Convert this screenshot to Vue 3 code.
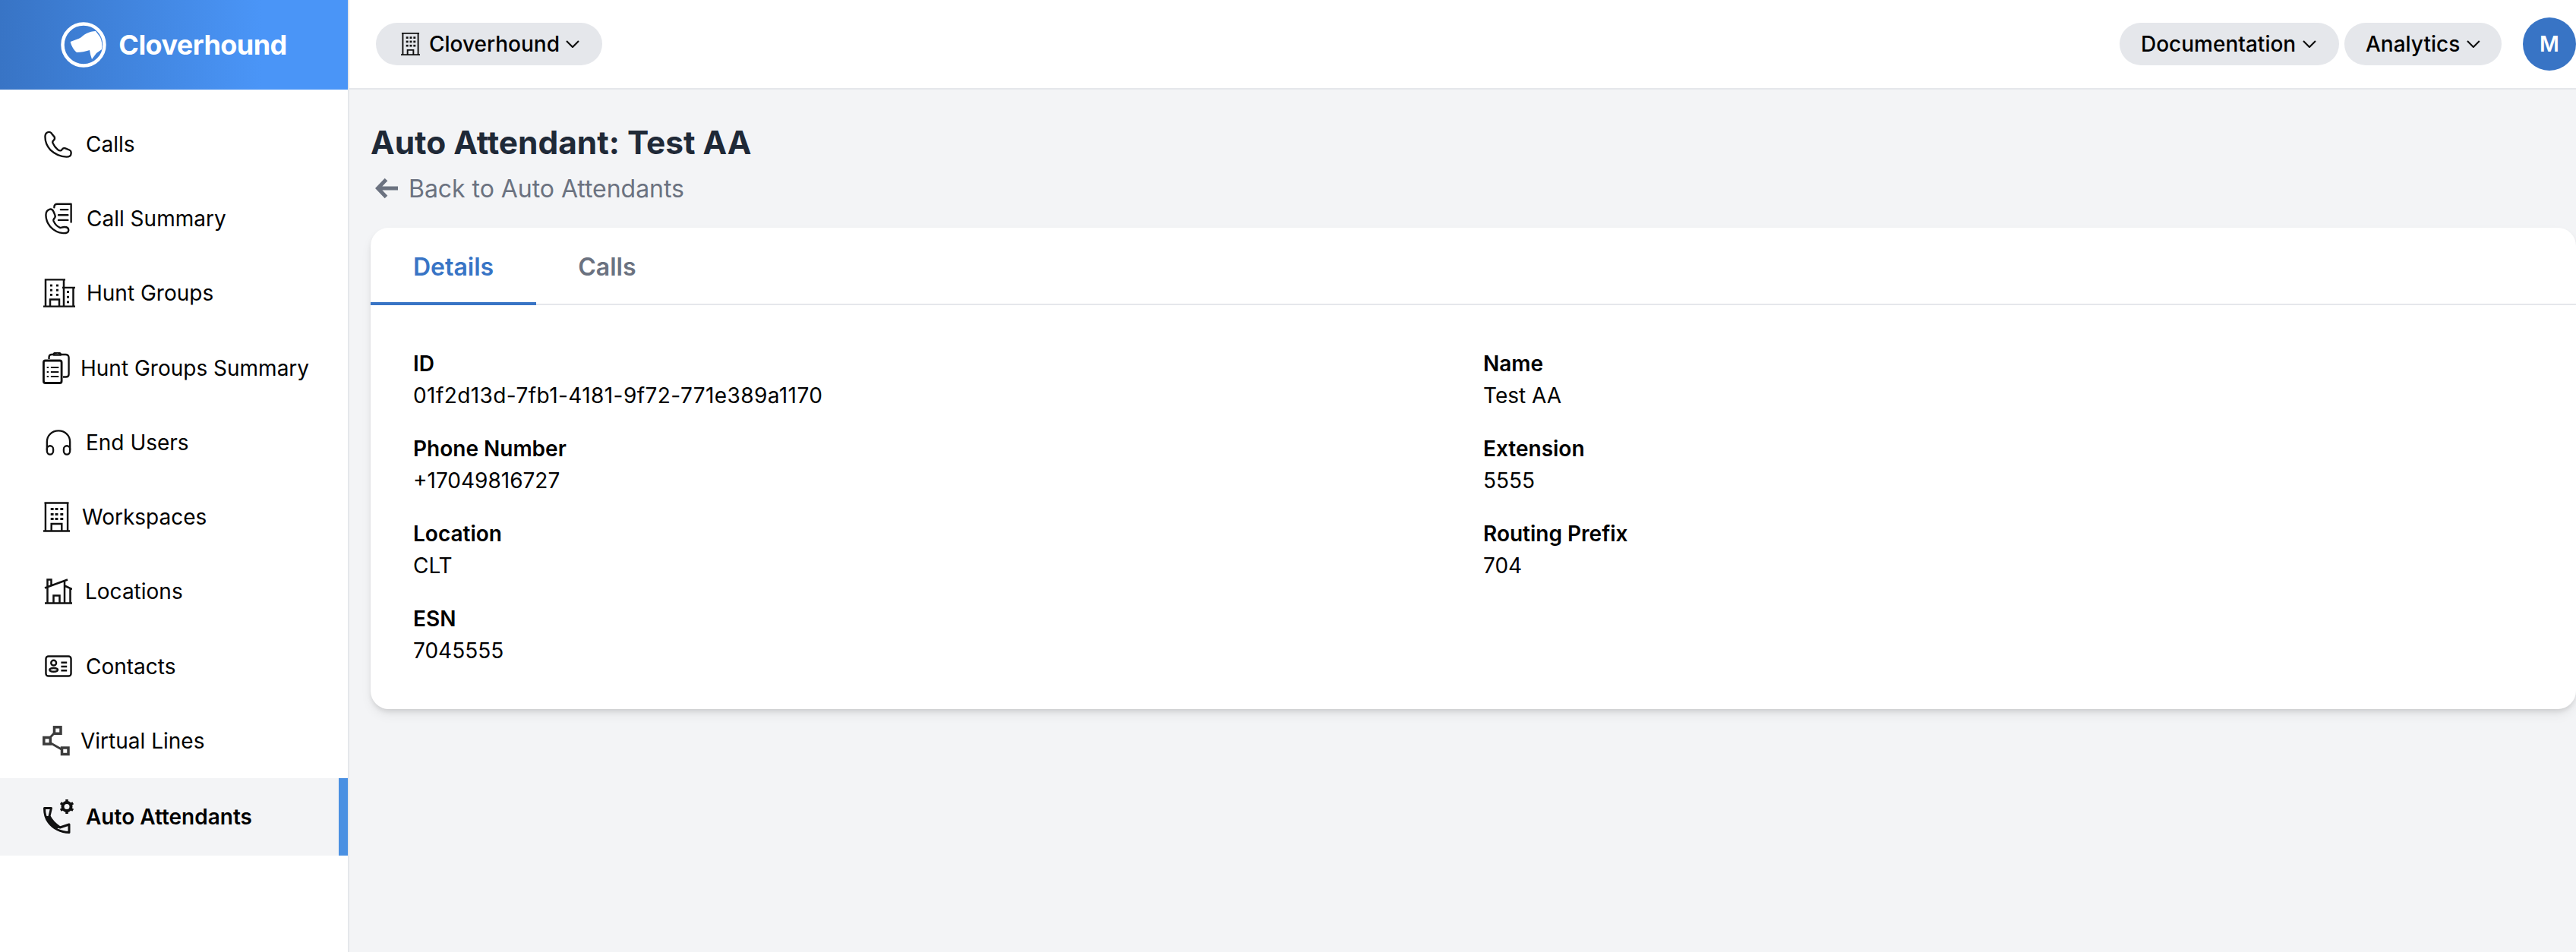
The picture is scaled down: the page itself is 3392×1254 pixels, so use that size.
<script setup>
const nav = [
  { label: 'Calls', icon: 'calls', ml: 2, w: 37, h: 36, gap: 18 },
  { label: 'Call Summary', icon: 'summary', ml: 3, w: 37, h: 42, gap: 18 },
  { label: 'Hunt Groups', icon: 'hunt', ml: 1, w: 42, h: 38, gap: 15 },
  { label: 'Hunt Groups Summary', icon: 'clip', ml: 0, w: 36, h: 42, gap: 14 },
  { label: 'End Users', icon: 'head', ml: 4, w: 34, h: 34, gap: 19 },
  { label: 'Workspaces', icon: 'work', ml: 1, w: 35, h: 40, gap: 16 },
  { label: 'Locations', icon: 'loc', ml: 0, w: 39, h: 34, gap: 17 },
  { label: 'Contacts', icon: 'contact', ml: 3, w: 36, h: 29, gap: 18 },
  { label: 'Virtual Lines', icon: 'vl', ml: 0, w: 36, h: 40, gap: 14 },
  { label: 'Auto Attendants', icon: 'auto', ml: 0, w: 43, h: 46, gap: 14, active: true }
];
const fields = [
  { k: 'ID', v: '01f2d13d-7fb1-4181-9f72-771e389a1170', wide: true },
  { k: 'Name', v: 'Test AA' },
  { k: 'Phone Number', v: '+17049816727' },
  { k: 'Extension', v: '5555' },
  { k: 'Location', v: 'CLT' },
  { k: 'Routing Prefix', v: '704' },
  { k: 'ESN', v: '7045555' }
];
</script>

<template>
  <div class="app">
    <aside class="sidebar">
      <div class="brand">
        <svg class="logo" width="60" height="60" viewBox="0 0 60 60">
          <circle cx="30" cy="30" r="27.500" fill="none" stroke="#fff" stroke-width="4.500" />
          <path fill="#fff" d="M12.700 26L24 21.700C28 20 30 16.500 34 15 38 13 42 12 46 12L52 20C54 25 55 30 54 36L47 41 41 49C39.500 45 38.500 41 38 37 32 39 27 40 21 40 18 38 14 32 12.700 26z" />
        </svg>
        <span class="brand-name">Cloverhound</span>
      </div>
      <nav class="nav">
        <a v-for="item in nav" :key="item.label" class="nav-item" :class="{ active: item.active }" :style="{ gap: item.gap + 'px' }">
          <svg v-if="item.icon === 'calls'" :style="{ marginLeft: item.ml + 'px' }" :width="item.w" :height="item.h" preserveAspectRatio="none" viewBox="0 0 39 40" fill="none" stroke="#111" stroke-width="2.500" stroke-linejoin="round">
            <path d="M5 2.500C2.800 3.500 1.500 6 1.500 9c0 7 2.500 14 7.500 19.500 5 5 12 9.500 22 10 3.500.2 6.500-1.500 6.500-4.500v-2.500c0-1.500-1-2.500-2.500-3.200l-5.500-2.300c-1.500-.6-2.800-.3-3.800.8l-1.700 2c-1.800 1-3.200.5-5-1-3-2.500-5.500-6-7-9.800-.5-1.700.3-3 1.500-4 1.500-1.200 1.500-2.800 1-4.500L11 5c-.8-2.300-3.500-3.500-6-2.500z" />
          </svg>
          <svg v-else-if="item.icon === 'summary'" :style="{ marginLeft: item.ml + 'px' }" :width="item.w" :height="item.h" preserveAspectRatio="none" viewBox="0 0 39 44" fill="none" stroke="#111" stroke-width="2.500" stroke-linecap="round" stroke-linejoin="round">
            <path d="M13 6.500C13 3 15 1.800 17 1.800h19.500v25" />
            <path d="M22 9.500h10M19 17h13M19 24h13" />
            <path d="M7 9C3.500 10 1.500 13 1.500 17c0 6 2 11 6 16 4.500 5 11 8.500 18 9 4.500.2 7.500-1 7.500-4s-2-4.500-6-4.500c-3 0-4.500 1.500-6 1-3.500-1.500-7-5-9-9.500-.7-2 1-3 2-4.500.8-1.500.5-3-.3-4.500L12 12c-1-2-3-3.500-5-3z" />
          </svg>
          <svg v-else-if="item.icon === 'hunt'" :style="{ marginLeft: item.ml + 'px' }" :width="item.w" :height="item.h" preserveAspectRatio="none" viewBox="0 0 42 40" fill="none" stroke="#111" stroke-width="2.500">
            <path d="M0 38.500h42M3 38.500V1.500h24v37M2 1.500h27M27 12.500h12.500v26M25 12.500h17M9 38.500v-9.500h12v9.500" />
            <g fill="#111" stroke="none">
              <rect x="9" y="8" width="3" height="3" /><rect x="17" y="8" width="3" height="3" />
              <rect x="9" y="14.500" width="3" height="3" /><rect x="17" y="14.500" width="3" height="3" />
              <rect x="9" y="21" width="3" height="3" /><rect x="17" y="21" width="3" height="3" />
              <rect x="31" y="17" width="3" height="3" /><rect x="31" y="24" width="3" height="3" /><rect x="31" y="31" width="3" height="3" />
            </g>
          </svg>
          <svg v-else-if="item.icon === 'clip'" :style="{ marginLeft: item.ml + 'px' }" :width="item.w" :height="item.h" preserveAspectRatio="none" viewBox="0 0 38 42" fill="none" stroke="#111" stroke-width="2.500" stroke-linejoin="round">
            <path d="M9 9V6.500C9 4.500 10.500 3 12.500 3H15c.5-1.500 3-2.500 5.500-2.500S25 1.500 25.500 3H32c2.500 0 4.500 1.500 4.500 4v22c0 2-1.500 3.500-4 3.500h-4" />
            <path d="M15 3.500h11" />
            <rect x="1.500" y="11" width="25" height="29.500" rx="2.500" stroke-width="3" />
            <path d="M11.500 20h11M11.500 26h11M11.500 32h11" stroke-width="2" />
            <path d="M6 20h2.500M6 26h2.500M6 32h2.500" stroke-width="2" />
          </svg>
          <svg v-else-if="item.icon === 'head'" :style="{ marginLeft: item.ml + 'px' }" :width="item.w" :height="item.h" preserveAspectRatio="none" viewBox="0 0 37 36" fill="none" stroke="#111" stroke-width="2.500">
            <path d="M2 28V17C2 8 9 1.500 18.500 1.500S35 8 35 17v11" />
            <rect x="2" y="22.500" width="9" height="12" rx="4.500" />
            <rect x="26" y="22.500" width="9" height="12" rx="4.500" />
          </svg>
          <svg v-else-if="item.icon === 'work'" :style="{ marginLeft: item.ml + 'px' }" :width="item.w" :height="item.h" preserveAspectRatio="none" viewBox="0 0 36 40" fill="none" stroke="#111" stroke-width="2.500">
            <path d="M0 38.500h36M3 38.500V1.500h30v37M1.500 1.500h33M11 38.500v-9.500h14v9.500" />
            <g fill="#111" stroke="none">
              <rect x="10" y="8" width="4" height="3" /><rect x="16" y="8" width="4" height="3" /><rect x="23" y="8" width="4" height="3" />
              <rect x="10" y="15" width="4" height="3" /><rect x="16" y="15" width="4" height="3" /><rect x="23" y="15" width="4" height="3" />
              <rect x="10" y="21" width="4" height="3" /><rect x="16" y="21" width="4" height="3" /><rect x="23" y="21" width="4" height="3" />
            </g>
          </svg>
          <svg v-else-if="item.icon === 'loc'" :style="{ marginLeft: item.ml + 'px' }" :width="item.w" :height="item.h" viewBox="0 0 39 34" fill="none" stroke="#111" stroke-width="2.500">
            <path d="M3 32.500h36M6.500 32.500V11.500M3 12.500L33 1.500M6.500 11V1.500h5V9M29 3.500v29M29 9.500L39 14M36.500 13.500v19M14.500 32.500V22.500h8v10" />
          </svg>
          <svg v-else-if="item.icon === 'contact'" :style="{ marginLeft: item.ml + 'px' }" :width="item.w" :height="item.h" preserveAspectRatio="none" viewBox="0 0 37 30" fill="none" stroke="#111" stroke-width="2.500">
            <rect x="1.500" y="1.500" width="34" height="27" rx="3.500" />
            <circle cx="12" cy="10.500" r="3.500" />
            <ellipse cx="12" cy="20" rx="5.500" ry="2.500" />
            <path d="M22 10h8M22 15.500h8M22 21h8" />
          </svg>
          <svg v-else-if="item.icon === 'vl'" :style="{ marginLeft: item.ml + 'px' }" :width="item.w" :height="item.h" viewBox="0 0 36 40" fill="none" stroke="#3c3c3c">
            <g stroke-width="3.500">
              <rect x="15.500" y="1.800" width="8.500" height="8.500" />
              <rect x="1.800" y="15.500" width="8.500" height="8.500" />
              <rect x="25.500" y="29" width="8.500" height="8.500" />
            </g>
            <path d="M9.500 16l6.500-7M11 23l14 8" stroke-width="3" />
          </svg>
          <svg v-else :style="{ marginLeft: item.ml + 'px' }" :width="item.w" :height="item.h" viewBox="0 0 43 46" fill="none" stroke="#111">
            <path d="M2.500 11.500H11.500L9 22C12 28 17 33 23 37L35 33V43.500C24 43.500 14 38 8 30 4 25 2.500 18 2.500 11.500z" stroke-width="3" stroke-linejoin="round" />
            <path d="M9 22C12 28 17 33 23 37L17 39C12 36 6 29 4 22z" fill="#111" stroke="none" />
            <circle cx="32" cy="9.500" r="5.500" stroke-width="4" />
            <path d="M32 0v3.500M32 15.500v3.500M23.800 4.700l3 1.800M37.200 12.500l3 1.800M23.800 14.300l3-1.800M37.200 6.500l3-1.800" stroke-width="3.500" />
          </svg>
          <span class="nav-label">{{ item.label }}</span>
        </a>
      </nav>
    </aside>

    <div class="main">
      <header class="topbar">
        <button class="pill left-pill">
          <svg width="25" height="30" preserveAspectRatio="none" viewBox="0 0 26 34" fill="none" stroke="#111" stroke-width="2">
            <path d="M0 33h26M2.500 33V1h21v32M1 1h24M9 33v-7h8v7" />
            <g fill="#111" stroke="none">
              <rect x="7" y="6" width="3" height="3" /><rect x="12" y="6" width="3" height="3" /><rect x="17" y="6" width="3" height="3" />
              <rect x="7" y="12" width="3" height="3" /><rect x="12" y="12" width="3" height="3" /><rect x="17" y="12" width="3" height="3" />
              <rect x="7" y="18" width="3" height="3" /><rect x="12" y="18" width="3" height="3" /><rect x="17" y="18" width="3" height="3" />
            </g>
          </svg>
          <span>Cloverhound</span>
          <svg class="chev" width="18" height="10" viewBox="0 0 18 10" fill="none" stroke="#111" stroke-width="2.200"><path d="M1 1l8 8 8-8" /></svg>
        </button>
        <div class="right">
          <button class="pill doc-pill">
            <span>Documentation</span>
            <svg class="chev" width="18" height="10" viewBox="0 0 18 10" fill="none" stroke="#111" stroke-width="2.200"><path d="M1 1l8 8 8-8" /></svg>
          </button>
          <button class="pill ana-pill">
            <span>Analytics</span>
            <svg class="chev" width="18" height="10" viewBox="0 0 18 10" fill="none" stroke="#111" stroke-width="2.200"><path d="M1 1l8 8 8-8" /></svg>
          </button>
          <div class="avatar">M</div>
        </div>
      </header>

      <main class="content">
        <h1 class="title">Auto Attendant: Test AA</h1>
        <a class="back">
          <svg width="30" height="28" viewBox="0 0 30 28" fill="none" stroke="#6b7280" stroke-width="5"><path d="M14.500 2.500L3.500 14l11 11.500M4 14h26" /></svg>
          <span>Back to Auto Attendants</span>
        </a>
        <section class="card">
          <div class="tabs">
            <div class="tab on">Details</div>
            <div class="tab second">Calls</div>
          </div>
          <div class="grid">
            <div v-for="f in fields" :key="f.k" class="field">
              <div class="k">{{ f.k }}</div>
              <div class="v" :class="{ wide: f.wide }">{{ f.v }}</div>
            </div>
          </div>
        </section>
      </main>
    </div>
  </div>
</template>

<style>
html, body { margin: 0; background: #f3f4f6; }
</style>

<style scoped>
.app { display: flex; width: 3392px; height: 1254px; overflow: hidden; font-family: Inter, "Liberation Sans", sans-serif; color: #000; background: #f3f4f6; }
.sidebar { width: 458px; flex: none; background: #fff; border-right: 2px solid #e5e7eb; }
.brand { height: 118px; display: flex; align-items: center; justify-content: center; gap: 16px; background: linear-gradient(90deg, #3874c5, #4a95f7 75%); color: #fff; }
.brand-name { font-size: 36px; font-weight: 700; letter-spacing: -0.55px; }
.nav { padding-top: 22.500px; }
.nav-item { height: 98.300px; box-sizing: border-box; display: flex; align-items: center; padding-left: 56px; font-size: 28px; line-height: 42px; color: #000; }
.nav-item svg { flex: none; }
.nav-item.active { height: 102px; background: #f3f4f6; font-weight: 600; border-right: 12px solid #4a90e2; }
.main { flex: 1; min-width: 0; display: flex; flex-direction: column; }
.topbar { height: 116px; flex: none; border-bottom: 2px solid #e5e7eb; background: #fff; display: flex; align-items: center; justify-content: space-between; padding-left: 35px; }
.right { display: flex; align-items: center; }
.pill { height: 56px; border: 0; border-radius: 28px; background: #e5e7eb; display: flex; align-items: center; font-family: inherit; font-size: 28px; font-weight: 500; color: #000; padding: 0 28px; margin: 0; }
.left-pill { gap: 8px; padding: 0 30px 0 33px; }
.left-pill svg:first-child { margin-right: 4px; }
.doc-pill { width: 289px; justify-content: flex-start; gap: 9px; }
.ana-pill { width: 207px; margin-left: 7px; justify-content: flex-start; gap: 9px; }
.avatar { width: 70px; height: 70px; border-radius: 50%; background: #3874c5; color: #fff; font-size: 28px; font-weight: 600; display: flex; align-items: center; justify-content: center; margin-left: 28px; }
.content { flex: 1; padding: 40px 0 0 28px; }
.title { margin: 0; font-size: 42.400px; line-height: 60px; font-weight: 700; color: #1f2937; }
.back { display: flex; align-items: center; gap: 14px; padding-left: 6px; height: 60px; font-size: 32px; letter-spacing: -0.04px; color: #6b7280; }
.card { margin-top: 22px; width: 2904px; background: #fff; border-radius: 24px; box-shadow: 0 4px 6px -1px rgba(0,0,0,.1), 0 8px 16px -2px rgba(0,0,0,.08); }
.tabs { display: flex; height: 102px; border-bottom: 2px solid #e5e7eb; box-sizing: border-box; }
.tab { padding: 0 56px; font-size: 32px; font-weight: 600; line-height: 104px; color: #6b7280; height: 102px; box-sizing: border-box; }
.tab.on { color: #3874c5; border-bottom: 4px solid #3874c5; }
.tab.second { padding-left: 55px; }
.grid { display: grid; grid-template-columns: 1409px 1fr; padding: 56px 56px 28px; }
.field { margin-bottom: 28px; }
.k { font-size: 28px; line-height: 42px; font-weight: 600; }
.v { font-size: 28px; line-height: 42px; }
.v.wide { letter-spacing: 0.42px; }
</style>
